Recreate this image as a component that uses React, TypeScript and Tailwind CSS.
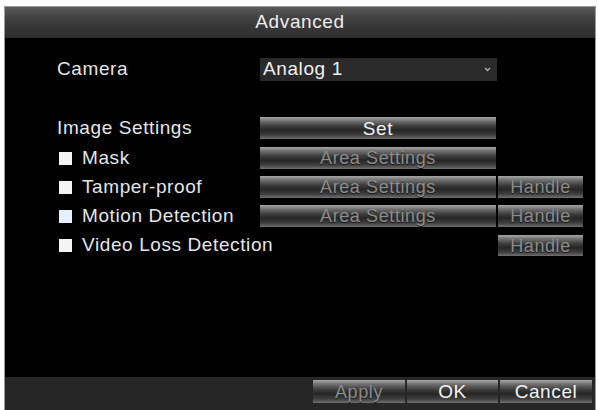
import React from "react";

const btnBg =
  "bg-[linear-gradient(to_bottom,#a8a8a8_0%,#707070_18%,#3c3c3c_42%,#262626_60%,#3e3e3e_82%,#707070_100%)]";

function Bar({
  label,
  disabled,
  className,
}: {
  label: string;
  disabled?: boolean;
  className: string;
}) {
  return (
    <div
      className={`${btnBg} ${className} flex items-center justify-center text-[18px] leading-none ${
        disabled
          ? "text-[#8c8c8c] [text-shadow:0_1px_0_#1a1a1a]"
          : "text-[#f2f2f2] text-[19px]"
      }`}
    >
      {label}
    </div>
  );
}

function Check({ blue }: { blue?: boolean }) {
  return (
    <div
      className={`w-[13px] h-[13px] shrink-0 ${
        blue ? "bg-[#e4f0fb]" : "bg-[#f4f4f4]"
      }`}
    />
  );
}

export default function App() {
  return (
    <div
      className="w-[598px] h-[410px] bg-white pt-[6px] pl-[4px] pr-[2px] flex"
      style={{ fontFamily: '"Liberation Sans", Arial, sans-serif' }}
    >
      <div className="flex-1 flex flex-col border-l border-r border-t border-[#9a9a9a] bg-black tracking-[0.6px]">
        <div className="h-[31px] shrink-0 bg-[linear-gradient(to_bottom,#5a5a5a_0%,#444444_30%,#383838_60%,#2e2e2e_100%)] flex items-center justify-center text-[19px] text-[#ececec]">
          Advanced
        </div>
        <div className="flex-1 flex flex-col pl-[52px] pt-[20px] text-[19px] text-[#e6e6e6]">
          <div className="flex items-center h-[23px]">
            <div className="w-[203px]">Camera</div>
            <div className="w-[237px] h-[23px] bg-[#2a2a2a] flex items-center justify-between pl-[3px] pr-[6px] text-[#f0f0f0]">
              <span>Analog 1</span>
              <svg width="7" height="5" viewBox="0 0 7 5">
                <path d="M1 1 L3.5 3.5 L6 1" stroke="#b0b0b0" strokeWidth="1.3" fill="none" />
              </svg>
            </div>
          </div>
          <div className="flex items-center h-[22px] mt-[36px]">
            <div className="w-[203px]">Image Settings</div>
            <Bar label="Set" className="w-[236px] h-[22px]" />
          </div>
          <div className="flex items-center h-[22px] mt-[8px]">
            <div className="w-[203px] flex items-center pl-[2px] gap-[10px]">
              <Check />
              <span>Mask</span>
            </div>
            <Bar label="Area Settings" disabled className="w-[236px] h-[22px]" />
          </div>
          <div className="flex items-center h-[22px] mt-[7px]">
            <div className="w-[203px] flex items-center pl-[2px] gap-[10px]">
              <Check />
              <span>Tamper-proof</span>
            </div>
            <Bar label="Area Settings" disabled className="w-[236px] h-[22px]" />
            <Bar label="Handle" disabled className="w-[85px] h-[22px] ml-[2px]" />
          </div>
          <div className="flex items-center h-[22px] mt-[7px]">
            <div className="w-[203px] flex items-center pl-[2px] gap-[10px]">
              <Check blue />
              <span>Motion Detection</span>
            </div>
            <Bar label="Area Settings" disabled className="w-[236px] h-[22px]" />
            <Bar label="Handle" disabled className="w-[85px] h-[22px] ml-[2px]" />
          </div>
          <div className="flex items-center h-[21px] mt-[8px]">
            <div className="w-[203px] flex items-center pl-[2px] gap-[10px] whitespace-nowrap">
              <Check />
              <span>Video Loss Detection</span>
            </div>
            <div className="w-[236px]" />
            <Bar label="Handle" disabled className="w-[85px] h-[21px] ml-[2px]" />
          </div>
        </div>
        <div className="h-[33px] shrink-0 bg-[#262626] flex items-start justify-end pt-[3px] pr-[3px] gap-[2px]">
          <Bar label="Apply" disabled className="w-[92px] h-[23px]" />
          <Bar label="OK" className="w-[91px] h-[23px]" />
          <Bar label="Cancel" className="w-[92px] h-[23px]" />
        </div>
      </div>
    </div>
  );
}
